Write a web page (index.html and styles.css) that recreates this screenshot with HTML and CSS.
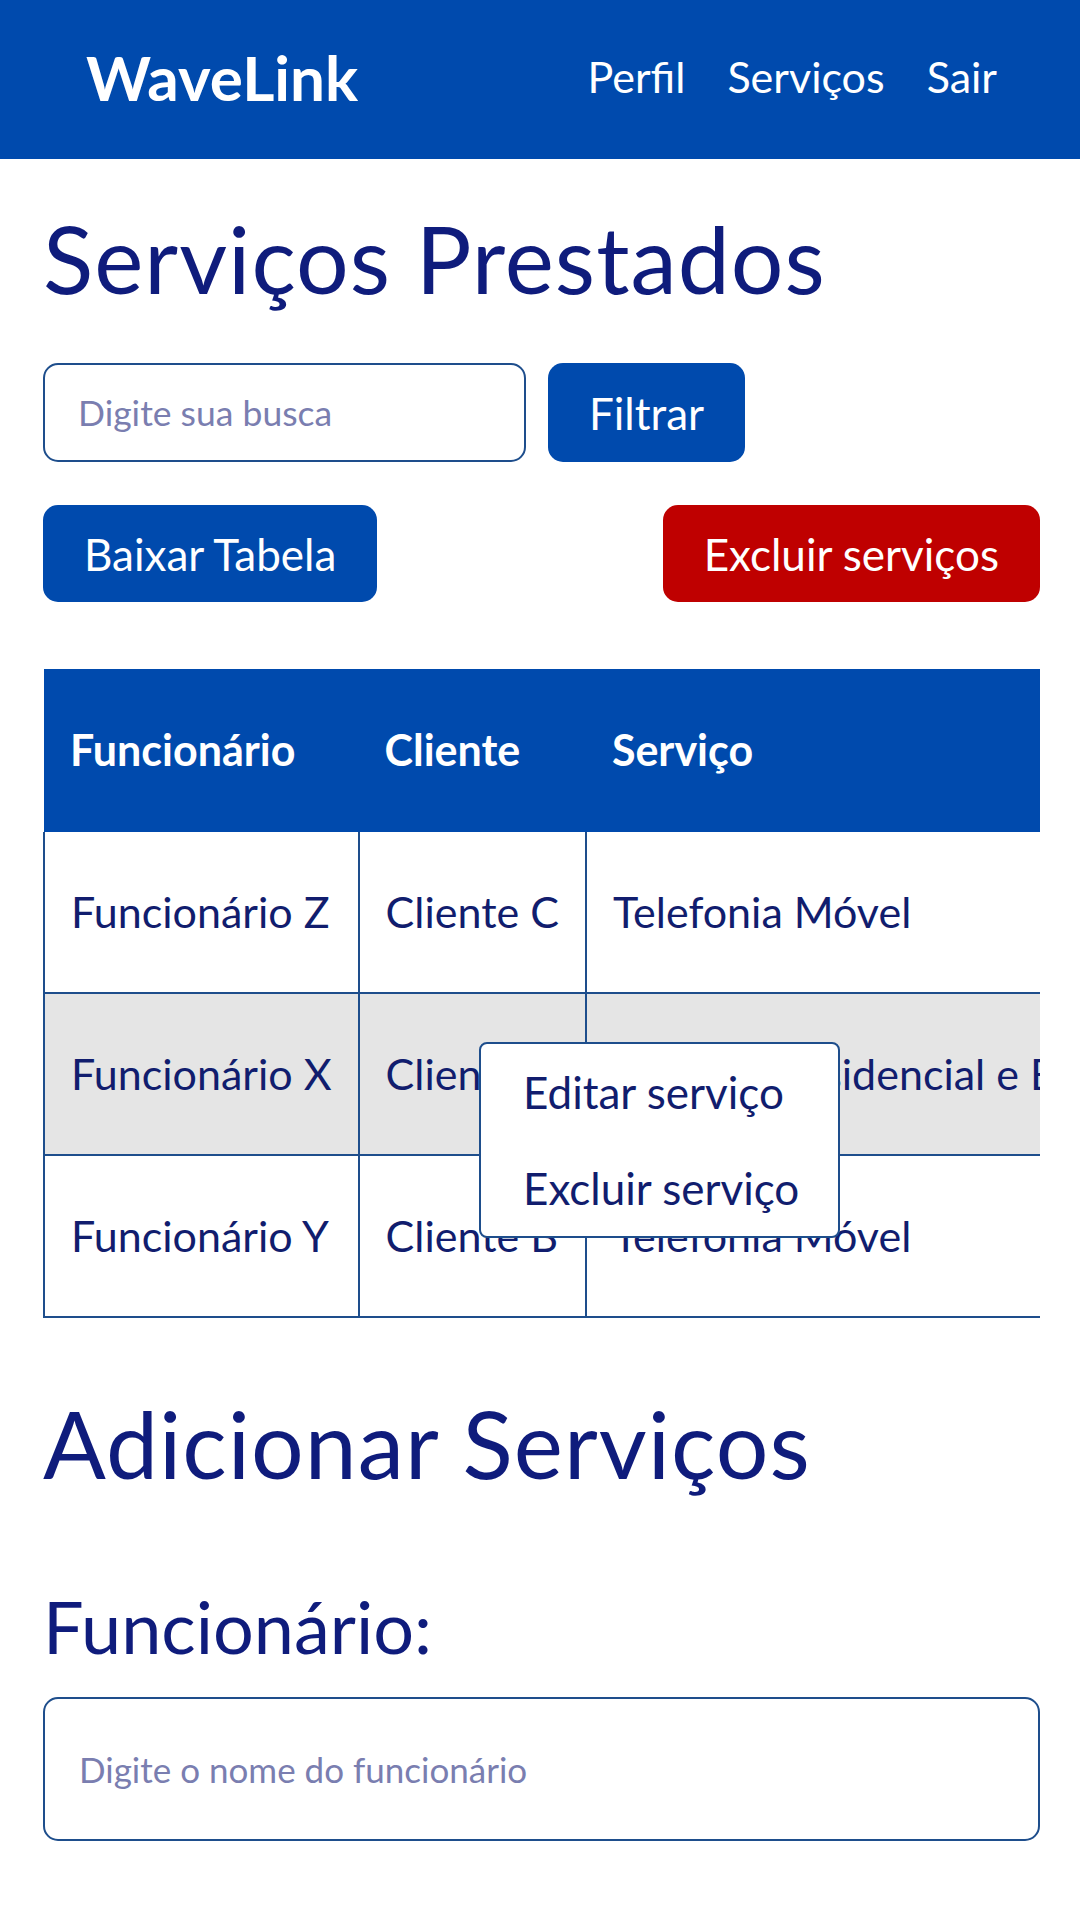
FILE: index.html
```html
<!DOCTYPE html>
<html lang="pt-BR">
<head>
<meta charset="utf-8">
<title>WaveLink - Serviços</title>
<link rel="stylesheet" href="styles.css">
</head>
<body>
<header class="topbar">
  <div class="logo">WaveLink</div>
  <nav class="nav">
    <a href="#">Perfil</a>
    <a href="#">Serviços</a>
    <a href="#">Sair</a>
  </nav>
</header>
<main class="content">
  <h1 class="page-title">Serviços Prestados</h1>
  <div class="search-row">
    <input class="search-input" type="text" placeholder="Digite sua busca">
    <button class="btn btn-blue">Filtrar</button>
  </div>
  <div class="action-row">
    <button class="btn btn-blue">Baixar Tabela</button>
    <button class="btn btn-red">Excluir serviços</button>
  </div>
  <div class="table-wrap">
    <table class="services">
      <thead>
        <tr><th>Funcionário</th><th>Cliente</th><th>Serviço</th><th>Data</th></tr>
      </thead>
      <tbody>
        <tr><td>Funcionário Z</td><td>Cliente C</td><td>Telefonia Móvel</td><td>10/03/2024</td></tr>
        <tr class="selected"><td>Funcionário X</td><td>Cliente A</td><td>Internet Residencial e Banda Larga</td><td>12/03/2024</td></tr>
        <tr><td>Funcionário Y</td><td>Cliente B</td><td>Telefonia Móvel</td><td>15/03/2024</td></tr>
      </tbody>
    </table>
    <div class="context-menu">
      <div class="menu-item">Editar serviço</div>
      <div class="menu-item">Excluir serviço</div>
    </div>
  </div>
  <h1 class="section-title">Adicionar Serviços</h1>
  <label class="field-label" for="func">Funcionário:</label>
  <input id="func" class="field-input" type="text" placeholder="Digite o nome do funcionário">
</main>
</body>
</html>
```

FILE: styles.css
```css
* { box-sizing: border-box; }
html, body { margin: 0; padding: 0; }
body {
  font-family: "Lato", "Noto Sans", sans-serif;
  color: #111d78;
  background: #ffffff;
}
.topbar {
  height: 159px;
  background: #004aad;
  display: flex;
  align-items: center;
  justify-content: space-between;
  padding: 0 83px 0 86px;
}
.logo {
  color: #ffffff;
  font-weight: 700;
  font-size: 62px;
  line-height: 72px;
  margin-top: -6px;
}
.nav {
  display: flex;
  gap: 42px;
  margin-top: -6px;
}
.nav a {
  color: #ffffff;
  text-decoration: none;
  font-size: 43px;
  line-height: 48px;
}
.content {
  padding: 0 40px 0 43px;
}
.page-title, .section-title {
  font-weight: 400;
  font-size: 93px;
  letter-spacing: 1px;
  line-height: 108px;
  margin: 0;
  color: #0f1c7c;
}
.page-title { margin-top: 45px; }
.search-row {
  display: flex;
  gap: 22px;
  margin-top: 51px;
}
.search-input {
  width: 483px;
  height: 99px;
  border: 2px solid #1e4e8c;
  border-radius: 15px;
  padding: 0 33px;
  font-family: inherit;
  font-size: 35.5px;
  color: #111d78;
  outline: none;
}
.search-input::placeholder, .field-input::placeholder { color: #7a7eb0; }
.btn {
  font-family: inherit;
  font-size: 44px;
  line-height: 48px;
  color: #ffffff;
  border: none;
  border-radius: 15px;
  padding: 0 41px;
  height: 99px;
  cursor: pointer;
}
.btn-blue { background: #004aad; }
.btn-red { background: #bf0000; }
.action-row {
  display: flex;
  justify-content: space-between;
  margin-top: 43px;
}
.action-row .btn { height: 97px; }
.table-wrap {
  position: relative;
  margin-top: 67px;
  overflow: hidden;
}
.services {
  border-collapse: collapse;
  white-space: nowrap;
  font-size: 43px;
  line-height: 48px;
}
.services th {
  background: #004aad;
  color: #ffffff;
  font-weight: 700;
  text-align: left;
  padding: 57px 26px 58px;
}
.services td {
  border: 2px solid #1e4e8c;
  padding: 56px 26px 56px;
  color: #111d6e;
}
.services tbody tr:first-child td { border-top: none; }
.services tr.selected td { background: #e5e5e5; }
.context-menu {
  position: absolute;
  left: 436px;
  top: 373px;
  width: 361px;
  background: #ffffff;
  border: 2px solid #1e4e8c;
  border-radius: 8px;
  padding: 0 40px 0 42px;
}
.menu-item {
  font-size: 44px;
  line-height: 48px;
  padding: 24px 0;
  white-space: nowrap;
  color: #111d6e;
}
.section-title { margin-top: 71px; }
.field-label {
  display: block;
  font-size: 72px;
  line-height: 86px;
  margin-top: 86px;
  color: #0f1c7c;
}
.field-input {
  display: block;
  width: 100%;
  height: 144px;
  margin-top: 28px;
  border: 2px solid #1e4e8c;
  border-radius: 15px;
  padding: 0 34px;
  font-family: inherit;
  font-size: 35px;
  color: #111d78;
  outline: none;
}
```
